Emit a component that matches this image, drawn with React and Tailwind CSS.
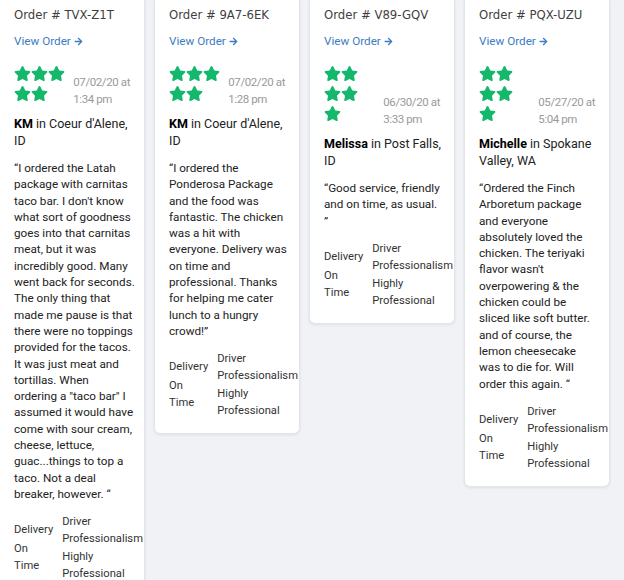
import React from "react";
import { FaStar, FaArrowRight } from "react-icons/fa";

// quote lines are kept as shown in the review widget
const orders = [
  {
    id: "TVX-Z1T",
    stars: 5,
    perRow: 3,
    date: "07/02/20 at",
    time: "1:34 pm",
    name: "KM",
    place: ["in Coeur d'Alene,", "ID"],
    quote: [
      "\u201CI ordered the Latah",
      "package with carnitas",
      "taco bar. I don't know",
      "what sort of goodness",
      "goes into that carnitas",
      "meat, but it was",
      "incredibly good. Many",
      "went back for seconds.",
      "The only thing that",
      "made me pause is that",
      "there were no toppings",
      "provided for the tacos.",
      "It was just meat and",
      "tortillas. When",
      "ordering a \"taco bar\" I",
      "assumed it would have",
      "come with sour cream,",
      "cheese, lettuce,",
      "guac...things to top a",
      "taco. Not a deal",
      "breaker, however. \u201C",
    ],
  },
  {
    id: "9A7-6EK",
    stars: 5,
    perRow: 3,
    date: "07/02/20 at",
    time: "1:28 pm",
    name: "KM",
    place: ["in Coeur d'Alene,", "ID"],
    quote: [
      "\u201CI ordered the",
      "Ponderosa Package",
      "and the food was",
      "fantastic. The chicken",
      "was a hit with",
      "everyone. Delivery was",
      "on time and",
      "professional. Thanks",
      "for helping me cater",
      "lunch to a hungry",
      "crowd!\u201D",
    ],
  },
  {
    id: "V89-GQV",
    stars: 5,
    perRow: 2,
    date: "06/30/20 at",
    time: "3:33 pm",
    name: "Melissa",
    place: ["in Post Falls,", "ID"],
    quote: ["\u201CGood service, friendly", "and on time, as usual.", "\u201D"],
  },
  {
    id: "PQX-UZU",
    stars: 5,
    perRow: 2,
    date: "05/27/20 at",
    time: "5:04 pm",
    name: "Michelle",
    place: ["in Spokane", "Valley, WA"],
    quote: [
      "\u201COrdered the Finch",
      "Arboretum package",
      "and everyone",
      "absolutely loved the",
      "chicken. The teriyaki",
      "flavor wasn't",
      "overpowering & the",
      "chicken could be",
      "sliced like soft butter.",
      "and of course, the",
      "lemon cheesecake",
      "was to die for. Will",
      "order this again. \u201C",
    ],
  },
];

const ReviewCard = ({ order }) => {
  return (
    <div className="w-[146px] shrink-0 bg-white rounded-b-[6px] border border-t-0 border-[#e2e5e9] shadow-[0_1px_3px_rgba(0,0,0,0.08)] px-[14px] pb-[14px] font-['Roboto',sans-serif] text-[#222]">
      <h3 className="pt-[5px] font-['DejaVu_Sans',sans-serif] text-[11.7px] leading-[20px] text-[#3f3f3f] whitespace-nowrap">
        Order # {order.id}
      </h3>
      <a className="mt-[8px] flex items-center gap-[3px] text-[11.7px] leading-[17px] text-[#3b7dc4]">
        View Order <FaArrowRight size={9} />
      </a>

      {/* stars + date */}
      <div className="mt-[15px] flex items-end justify-between">
        <div
          className={`flex flex-wrap gap-y-[3px] pb-[6px] text-[#14b86c] ${
            order.perRow === 3 ? "w-[51px]" : "w-[34px]"
          }`}
        >
          {Array.from({ length: order.stars }).map((_, i) => (
            <FaStar key={i} size={17} />
          ))}
        </div>
        <div className="whitespace-nowrap text-[11.5px] tracking-[-0.4px] leading-[17px] text-[#9a9a9a]">
          <div>{order.date}</div>
          <div>{order.time}</div>
        </div>
      </div>

      <p className="mt-[7px] text-[12.5px] leading-[17px] whitespace-nowrap">
        <b className="font-bold text-black">{order.name}</b> {order.place[0]}
        <br />
        {order.place[1]}
      </p>

      <p className="mt-[11px] text-[11.7px] leading-[16.3px] whitespace-nowrap">
        {order.quote.map((line, i) => (
          <React.Fragment key={i}>
            {line}
            {i < order.quote.length - 1 && <br />}
          </React.Fragment>
        ))}
      </p>

      {/* ratings */}
      <div className="mt-[11px] flex items-center text-[11.2px] leading-[17px] text-[#333]">
        <div className="w-min flex flex-col gap-[2px]">
          <span>Delivery</span>
          <span>On Time</span>
        </div>
        <div className="ml-[9px] flex flex-col gap-px shrink-0">
          <span>
            Driver
            <br />
            Professionalism
          </span>
          <span>
            Highly
            <br />
            Professional
          </span>
        </div>
      </div>
    </div>
  );
};

const App = () => {
  return (
    <div className="h-[580px] w-[624px] overflow-hidden bg-[#f0f2f5]">
      <div className="-ml-px flex items-start gap-[9px]">
        {orders.map((o) => (
          <ReviewCard key={o.id} order={o} />
        ))}
      </div>
    </div>
  );
};

export default App;
